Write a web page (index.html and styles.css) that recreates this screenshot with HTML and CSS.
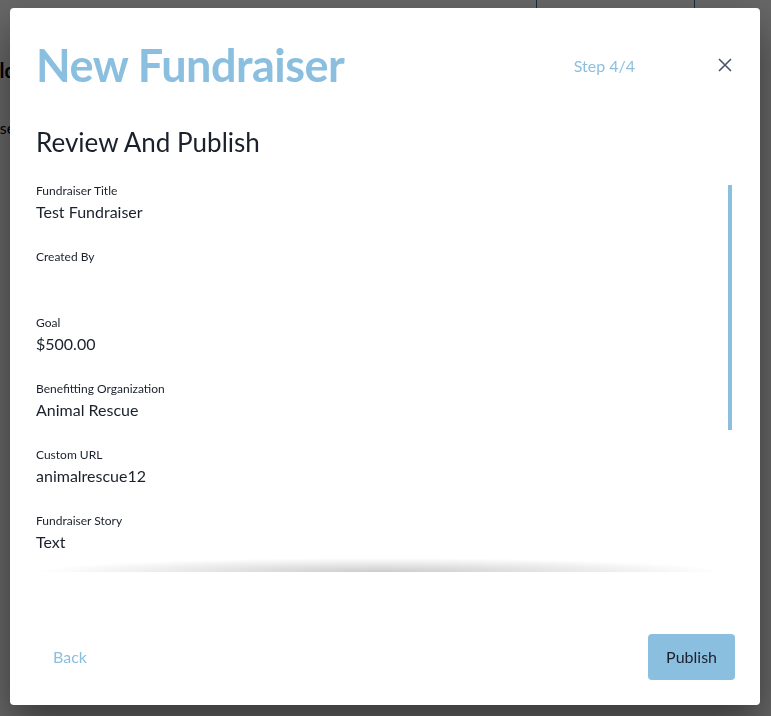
FILE: index.html
```html
<!DOCTYPE html>
<html>
<head>
    <meta charset="utf-8">
    <title>New Fundraiser</title>
    <link rel="stylesheet" href="styles.css">
</head>
<body>
    <div class="page">
        <div class="page-tabs"><span class="tab"></span></div>
        <h2 class="page-title">Hold</h2>
        <p class="page-text">Please</p>
    </div>
    <div class="overlay"></div>

    <div class="modal">
        <div class="modal-header">
            <h1 class="modal-title">New Fundraiser</h1>
            <span class="step">Step 4/4</span>
            <button class="close" type="button">
                <svg width="14" height="14" viewBox="0 0 14 14">
                    <path d="M1 1L13 13M13 1L1 13" stroke="#4a5568" stroke-width="1.6" fill="none"/>
                </svg>
            </button>
        </div>

        <h2 class="section-title">Review And Publish</h2>

        <div class="review">
            <div class="field">
                <div class="label">Fundraiser Title</div>
                <div class="value">Test Fundraiser</div>
            </div>
            <div class="field">
                <div class="label">Created By</div>
                <div class="value"></div>
            </div>
            <div class="field">
                <div class="label">Goal</div>
                <div class="value">$500.00</div>
            </div>
            <div class="field">
                <div class="label">Benefitting Organization</div>
                <div class="value">Animal Rescue</div>
            </div>
            <div class="field">
                <div class="label">Custom URL</div>
                <div class="value">animalrescue12</div>
            </div>
            <div class="field">
                <div class="label">Fundraiser Story</div>
                <div class="value">Text</div>
            </div>
            <!-- fake scrollbar, headless shots hide the real one -->
            <div class="scroll-thumb"></div>
            <div class="fade"></div>
        </div>

        <div class="modal-footer">
            <button class="back" type="button">Back</button>
            <button class="publish" type="button">Publish</button>
        </div>
    </div>
</body>
</html>
```

FILE: styles.css
```css
*{
    box-sizing: border-box;
}
body{
    margin: 0;
    height: 716px;
    overflow: hidden;
    background: #fff;
    font-family: Lato, "Liberation Sans", sans-serif;
    color: #1a202c;
}

/* page behind the dialog */
.page-tabs{
    height: 48px;
}
.page-tabs .tab{
    display: block;
    margin-left: 536px;
    width: 159px;
    height: 48px;
    border-left: 1px solid #3b6a99;
    border-right: 1px solid #3b6a99;
}
.page-title{
    margin: 10px 0 0 -27px;
    font-size: 20px;
    font-weight: 700;
    color: #000;
}
.page-text{
    margin: 36px 0 0 -30px;
    font-size: 16px;
    color: #000;
}
.overlay{
    position: fixed;
    top: 0;
    left: 0;
    right: 0;
    bottom: 0;
    background: rgba(0,0,0,.6);
}

/* dialog */
.modal{
    position: fixed;
    top: 8px;
    left: 10px;
    width: 750px;
    height: 697px;
    display: flex;
    flex-direction: column;
    background: #fff;
    border-radius: 4px;
    box-shadow: 0 20px 40px rgba(0,0,0,.45);
}
.modal-header{
    display: flex;
    align-items: center;
    padding: 29px 28px 0 26px;
}
.modal-title{
    flex: 1;
    margin: 0;
    font-size: 45px;
    line-height: 56px;
    font-weight: 700;
    letter-spacing: -.5px;
    color: #8bbfdf;
}
.step{
    font-size: 16px;
    color: #8bbfdf;
}
.close{
    display: flex;
    margin-left: 83px;
    padding: 0;
    border: 0;
    background: none;
}
.section-title{
    margin: 32px 0 23px;
    padding-left: 26px;
    font-size: 26px;
    line-height: 34px;
    font-weight: 400;
}

.review{
    position: relative;
    height: 390px;
    overflow: hidden;
    padding: 0 26px;
}
.field{
    margin-bottom: 24px;
}
.label{
    font-size: 12px;
    line-height: 18px;
}
.value{
    height: 24px;
    font-size: 16px;
    line-height: 24px;
}
.scroll-thumb{
    position: absolute;
    top: 3px;
    right: 28px;
    width: 4px;
    height: 245px;
    background: #8bbfdf;
}
.fade{
    position: absolute;
    left: 25px;
    right: 35px;
    bottom: 0;
    height: 14px;
    background: radial-gradient(50% 100% at 50% 100%, rgba(0,0,0,.2), rgba(0,0,0,0));
}

.modal-footer{
    display: flex;
    justify-content: space-between;
    align-items: center;
    margin-top: auto;
    padding: 0 25px 25px;
}
.modal-footer button{
    padding: 11px 18px;
    border: 0;
    border-radius: 4px;
    font-family: inherit;
    font-size: 16px;
    line-height: 24px;
    cursor: pointer;
}
.back{
    background: none;
    color: #8bbfdf;
}
.publish{
    background: #8bbfdf;
    color: #1a202c;
}
```
